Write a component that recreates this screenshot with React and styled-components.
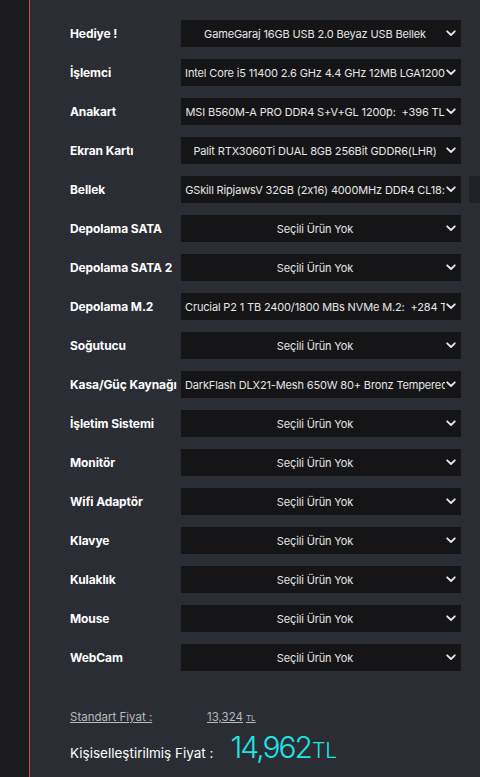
import React from 'react';
import styled, { createGlobalStyle } from 'styled-components';

const GlobalStyle = createGlobalStyle`
  html, body {
    margin: 0;
    padding: 0;
    background: #1c1c20;
    overflow: hidden;
  }
  body {
    font-family: Inter, "Noto Sans", sans-serif;
  }
`;

const rows = [
  { label: 'Hediye !', value: 'GameGaraj 16GB USB 2.0 Beyaz USB Bellek' },
  { label: 'İşlemci', value: 'Intel Core i5 11400 2.6 GHz 4.4 GHz 12MB LGA1200' },
  { label: 'Anakart', value: 'MSI B560M-A PRO DDR4 S+V+GL 1200p:  +396 TL' },
  { label: 'Ekran Kartı', value: 'Palit RTX3060Ti DUAL 8GB 256Bit GDDR6(LHR)' },
  { label: 'Bellek', value: 'GSkill RipjawsV 32GB (2x16) 4000MHz DDR4 CL18:', extra: true },
  { label: 'Depolama SATA' },
  { label: 'Depolama SATA 2' },
  { label: 'Depolama M.2', value: 'Crucial P2 1 TB 2400/1800 MBs NVMe M.2:  +284 TL' },
  { label: 'Soğutucu' },
  { label: 'Kasa/Güç Kaynağı', value: 'DarkFlash DLX21-Mesh 650W 80+ Bronz Tempered' },
  { label: 'İşletim Sistemi' },
  { label: 'Monitör' },
  { label: 'Wifi Adaptör' },
  { label: 'Klavye' },
  { label: 'Kulaklık' },
  { label: 'Mouse' },
  { label: 'WebCam' },
];

const Page = styled.div`
  display: flex;
  min-height: 777px;
`;

const SideStrip = styled.div`
  width: 29px;
  flex-shrink: 0;
  background: #1c1c20;
`;

const Panel = styled.main`
  flex: 1;
  background: #2a2d33;
  border-left: 1px solid #d04a45;
  padding: 20px 0 0 40px;
  min-width: 0;
  overflow: hidden;
`;

const List = styled.div`
  display: flex;
  flex-direction: column;
  gap: 12px;
`;

const Row = styled.div`
  display: flex;
  align-items: center;
  height: 27px;
`;

const Label = styled.div`
  width: 111px;
  flex-shrink: 0;
  color: #ffffff;
  font-weight: 700;
  font-size: 12px;
  white-space: nowrap;
  letter-spacing: -0.1px;
`;

const Select = styled.div`
  position: relative;
  width: 280px;
  height: 27px;
  flex-shrink: 0;
  background: #151517;
  display: flex;
  align-items: center;
  padding: 0 16px 0 4px;
  box-sizing: border-box;
`;

const SelectText = styled.span`
  flex: 1;
  min-width: 0;
  overflow: hidden;
  white-space: pre;
  text-align: center;
  color: #e6e6e6;
  font-size: 11px;
  letter-spacing: -0.15px;
`;

const Chevron = styled.svg`
  position: absolute;
  right: 5px;
  top: 10px;
`;

const Extra = styled.div`
  width: 40px;
  height: 27px;
  margin-left: 8px;
  flex-shrink: 0;
  background: #1f2125;
`;

const Prices = styled.div`
  margin-top: 39px;
  display: flex;
  flex-direction: column;
  gap: 5px;
`;

const StandardLine = styled.div`
  display: flex;
  align-items: baseline;
  color: #b9bbbf;
  font-size: 11.5px;
`;

const StandardLabel = styled.span`
  width: 137px;
  text-decoration: underline;
`;

const StandardValue = styled.span`
  text-decoration: underline;
`;

const SmallTL = styled.span`
  font-size: 8px;
  margin-left: 3px;
`;

const CustomLine = styled.div`
  display: flex;
  align-items: baseline;
  color: #ffffff;
  font-size: 13.5px;
`;

const CustomLabel = styled.span`
  margin-right: 17px;
`;

const BigPrice = styled.span`
  color: #1ee6e6;
  font-size: 30px;
  font-weight: 300;
  letter-spacing: -2px;
`;

const BigTL = styled.span`
  color: #1ee6e6;
  font-size: 21px;
  font-weight: 300;
  margin-left: 1px;
`;

const ChevronIcon = () => (
  <Chevron width="10" height="7" viewBox="0 0 10 7">
    <path d="M1.2 1.3 L5 5 L8.8 1.3" fill="none" stroke="#e8e8e8" strokeWidth="1.8" strokeLinecap="round" strokeLinejoin="round" />
  </Chevron>
);

export default function App() {
  return (
    <>
      <GlobalStyle />
      <Page>
        <SideStrip />
        <Panel>
          <List>
            {rows.map((r) => (
              <Row key={r.label}>
                <Label>{r.label}</Label>
                <Select>
                  <SelectText>{r.value || 'Seçili Ürün Yok'}</SelectText>
                  <ChevronIcon />
                </Select>
                {r.extra && <Extra />}
              </Row>
            ))}
          </List>
          <Prices>
            <StandardLine>
              <StandardLabel>Standart Fiyat :</StandardLabel>
              <StandardValue>
                13,324<SmallTL>TL</SmallTL>
              </StandardValue>
            </StandardLine>
            <CustomLine>
              <CustomLabel>Kişiselleştirilmiş Fiyat :</CustomLabel>
              <BigPrice>14,962</BigPrice>
              <BigTL>TL</BigTL>
            </CustomLine>
          </Prices>
        </Panel>
      </Page>
    </>
  );
}
